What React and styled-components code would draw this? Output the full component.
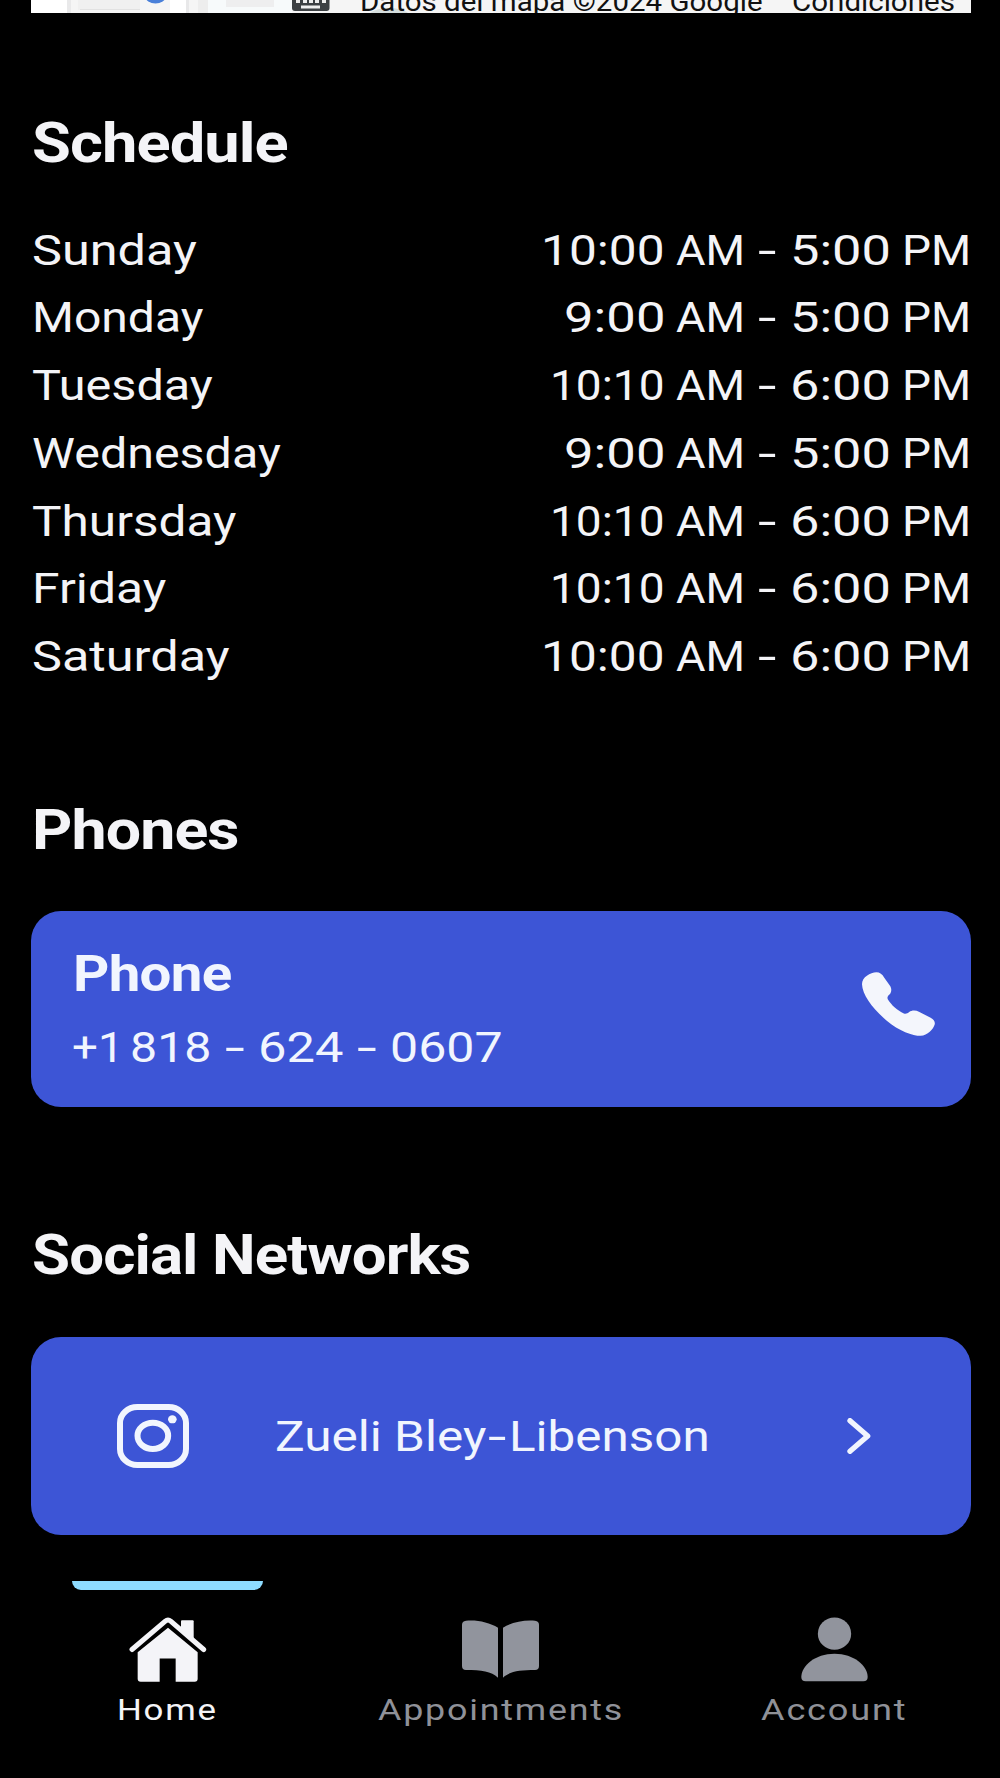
import { useLayoutEffect, useRef, useState } from 'react'
import styled, { createGlobalStyle } from 'styled-components'

const schedule = [
    { day: 'Sunday', dayWidth: 164.5, open: '10:00', openWidth: 124, close: '5:00' },
    { day: 'Monday', dayWidth: 171.5, open: '9:00', openWidth: 101.5, close: '5:00' },
    { day: 'Tuesday', dayWidth: 180.5, open: '10:10', openWidth: 115, close: '6:00' },
    { day: 'Wednesday', dayWidth: 249, open: '9:00', openWidth: 101.5, close: '5:00' },
    { day: 'Thursday', dayWidth: 204, open: '10:10', openWidth: 115, close: '6:00' },
    { day: 'Friday', dayWidth: 134, open: '10:10', openWidth: 115, close: '6:00' },
    { day: 'Saturday', dayWidth: 198, open: '10:00', openWidth: 124, close: '6:00' },
]

// Stretches its text sideways until it fills the given width
const WideText = ({ width, children }) => {
    const textRef = useRef()
    const [scale, setScale] = useState(1)

    useLayoutEffect(() => {
        setScale(width / textRef.current.offsetWidth)
    }, [width, children])

    return (
        <TextBox $width={width}>
            <TextInner ref={textRef} style={{ transform: `scaleX(${scale})` }}>
                {children}
            </TextInner>
        </TextBox>
    )
}

const MapPicture = () => (
    <MapSvg width="940" height="13" viewBox="31 0 940 13">
        <rect x="31" y="0" width="940" height="13" fill="#f5f5f5" />
        <rect x="31" y="0" width="36" height="13" fill="#ffffff" />
        <rect x="67" y="0" width="4" height="13" fill="#e9e9ea" />
        <rect x="78" y="0" width="62" height="10" fill="#f0f0f0" />
        <rect x="80" y="9" width="60" height="1" fill="#e2e2e2" />
        <ellipse cx="155.5" cy="-3" rx="10" ry="6.5" fill="#4a80d9" />
        <rect x="170" y="0" width="16" height="13" fill="#ffffff" />
        <rect x="186" y="0" width="3" height="13" fill="#e8e8e9" />
        <rect x="198" y="0" width="10" height="13" fill="#ededed" />
        <rect x="208" y="0" width="84" height="13" fill="#f7fafb" />
        <rect x="226" y="0" width="48" height="7" fill="#eeeeef" />
        <path d="M370 13 C378 7 398 6 408 13Z" fill="#d5dddd" />
        <rect x="292" y="-14" width="37.5" height="25" rx="3" fill="#3c4043" />
        <path d="M296 0h4v3h-4z M303 0h4v3h-4z M309 0h4v3h-4z M315 0h4v3h-4z M322 0h4v3h-4z M301 5.5h19v3h-19z" fill="#eeeeee" />
    </MapSvg>
)

const PhoneIcon = () => (
    <svg width="73" height="64" viewBox="189 248 218 190">
        <path
            fill="#f4f6fc"
            d="M232 248C242 248 250 254 255 264L272 288C279 298 277 308 271 315C265 320 264 324 266 329C277 347 295 363 314 371C320 373 325 371 330 367C337 361 350 361 359 366L394 384C404 390 408 396 406 404C402 418 385 436 364 438C340 438 300 424 262 392C222 358 190 316 189 284C189 262 214 249 232 248Z"
        />
    </svg>
)

const InstagramIcon = () => (
    <svg width="72" height="64" viewBox="352 581 216 192" fill="none" stroke="#f1f5fe" strokeWidth="18">
        <rect x="361" y="590" width="198" height="174" rx="52" ry="48" />
        <ellipse cx="459.5" cy="676.5" rx="46" ry="39.5" />
        <ellipse cx="518" cy="627" rx="13" ry="12" fill="#f1f5fe" stroke="none" />
    </svg>
)

const ChevronIcon = () => (
    <svg width="24" height="36" viewBox="1040 323 72 108">
        <path
            d="M1049 331L1102 377L1049 423"
            fill="none"
            stroke="#f1f5fe"
            strokeWidth="16"
            strokeLinecap="round"
            strokeLinejoin="round"
        />
    </svg>
)

const HomeIcon = () => (
    <svg width="78" height="65" viewBox="265 171.5 234 195" fill="#f4f4f8">
        <path
            d="M274 269L374 184Q382 177 390 184L489 269"
            fill="none"
            stroke="#f4f4f8"
            strokeWidth="15"
            strokeLinecap="round"
        />
        <path d="M421 184Q421 181 424 181H456Q459 181 459 184V245L421 212Z" />
        <path d="M382 204L471 277V357Q471 366 462 366H405V296H357V366H300Q291 366 291 357V277Z" />
    </svg>
)

const BookIcon = () => (
    <svg width="77" height="58" viewBox="306 89 231 174" fill="#91949d">
        <path d="M318 91C352 88 388 96 414 112V262C394 243 364 239 318 239Q306 239 306 227V103Q306 92 318 91Z" />
        <path d="M525 91C491 88 455 96 429 112V262C449 243 479 239 525 239Q537 239 537 227V103Q537 92 525 91Z" />
    </svg>
)

const PersonIcon = () => (
    <svg width="67" height="65" viewBox="303 82 201 195" fill="#91949d">
        <ellipse cx="403.5" cy="132" rx="50" ry="48.5" />
        <path d="M304 262C304 228 345 192 403.5 192C462 192 503 228 503 262Q503 275 490 275H317Q304 275 304 262Z" />
    </svg>
)

const App = () => {
    return (
        <Screen>
            <GlobalStyle />
            <MapStrip>
                <MapPicture />
                <MapCredit>
                    <WideText width={403}>Datos del mapa ©2024 Google</WideText>
                    <WideText width={163}>Condiciones</WideText>
                </MapCredit>
            </MapStrip>
            <Content>
                <ScheduleSection>
                    <Title>
                        <WideText width={256}>Schedule</WideText>
                    </Title>
                    <DayList>
                        {schedule.map((item) => (
                            <DayRow key={item.day}>
                                <WideText width={item.dayWidth}>{item.day}</WideText>
                                <Hours>
                                    <Time>
                                        <WideText width={item.openWidth}>{item.open}</WideText>{' '}
                                        <WideText width={69}>AM</WideText>
                                    </Time>{' '}
                                    <WideText width={19}>-</WideText>{' '}
                                    <Time>
                                        <WideText width={101}>{item.close}</WideText>{' '}
                                        <WideText width={69}>PM</WideText>
                                    </Time>
                                </Hours>
                            </DayRow>
                        ))}
                    </DayList>
                </ScheduleSection>
                <PhoneSection>
                    <Title>
                        <WideText width={207}>Phones</WideText>
                    </Title>
                    <PhoneCard>
                        <div>
                            <PhoneName>
                                <WideText width={158}>Phone</WideText>
                            </PhoneName>
                            <PhoneNumber>
                                <WideText width={52}>+1</WideText>{' '}
                                <WideText width={82}>818</WideText>{' '}
                                <WideText width={20}>-</WideText>{' '}
                                <WideText width={86}>624</WideText>{' '}
                                <WideText width={20}>-</WideText>{' '}
                                <WideText width={113}>0607</WideText>
                            </PhoneNumber>
                        </div>
                        <PhoneIcon />
                    </PhoneCard>
                </PhoneSection>
                <SocialSection>
                    <Title>
                        <WideText width={438}>Social Networks</WideText>
                    </Title>
                    <SocialCard>
                        <InstagramIcon />
                        <SocialName>
                            <WideText width={211}>Zueli Bley</WideText>
                            <WideText width={19}>-</WideText>
                            <WideText width={201}>Libenson</WideText>
                        </SocialName>
                        <ChevronIcon />
                    </SocialCard>
                </SocialSection>
            </Content>
            <NavBar>
                <NavItem $active>
                    <NavIcon>
                        <HomeIcon />
                    </NavIcon>
                    <WideText width={101}>Home</WideText>
                </NavItem>
                <NavItem>
                    <NavIcon>
                        <BookIcon />
                    </NavIcon>
                    <WideText width={246}>Appointments</WideText>
                </NavItem>
                <NavItem>
                    <NavIcon>
                        <PersonIcon />
                    </NavIcon>
                    <WideText width={147}>Account</WideText>
                </NavItem>
            </NavBar>
        </Screen>
    )
}

const GlobalStyle = createGlobalStyle`
    * {
        box-sizing: border-box;
    }
    body {
        margin: 0;
        background: #000;
        font-family: Roboto, 'Liberation Sans', sans-serif;
    }
    svg {
        display: block;
        flex-shrink: 0;
    }
`

const Screen = styled.div`
    display: flex;
    flex-direction: column;
    width: 1000px;
    height: 1778px;
    overflow: hidden;
    background: #000;
    color: #f4f4f7;
`

const TextBox = styled.span`
    display: block;
    flex-shrink: 0;
    width: ${({ $width }) => $width}px;
    white-space: nowrap;
`

const TextInner = styled.span`
    display: inline-block;
    transform-origin: left center;
`

const MapStrip = styled.div`
    position: relative;
    height: 13px;
    flex-shrink: 0;
    margin: 0 29px 0 31px;
    overflow: hidden;
`

const MapSvg = styled.svg`
    position: absolute;
    inset: 0;
`

const MapCredit = styled.div`
    position: relative;
    display: flex;
    justify-content: flex-end;
    gap: 29px;
    margin-top: -13px;
    padding-right: 16px;
    color: #111;
    font-size: 27px;
    line-height: 30px;
`

const Content = styled.main`
    padding: 100px 29px 0 31px;
`

const Title = styled.h2`
    margin: 0;
    padding-left: 1px;
    font-size: 56px;
    font-weight: 700;
    line-height: 61px;
    letter-spacing: -0.8px;
`

const ScheduleSection = styled.section`
    height: 687px;
`

const PhoneSection = styled.section`
    height: 425px;
`

const SocialSection = styled.section`
    height: 310px;
`

const DayList = styled.div`
    margin-top: 42.5px;
`

const DayRow = styled.div`
    display: flex;
    justify-content: space-between;
    height: 67.8px;
    padding-left: 1px;
    font-size: 42px;
    line-height: 67.6px;
`

const Hours = styled.div`
    display: flex;
    gap: 13px;
`

const Time = styled.div`
    display: flex;
    gap: 11px;
`

const Card = styled.div`
    display: flex;
    align-items: center;
    border-radius: 30px;
    background: #3d55d6;
    color: #f1f5fe;
`

const PhoneCard = styled(Card)`
    justify-content: space-between;
    height: 196px;
    margin-top: 50px;
    padding: 5px 36px 0 41px;

    svg {
        margin-bottom: 15px;
    }
`

const PhoneName = styled.div`
    padding-left: 1px;
    font-size: 50px;
    font-weight: 700;
    line-height: 71px;
    letter-spacing: -0.6px;
`

const PhoneNumber = styled.div`
    display: flex;
    gap: 13px;
    font-size: 43px;
    line-height: 75px;

    & > :first-child {
        margin-right: -7px;
    }
`

const SocialCard = styled(Card)`
    height: 198px;
    margin-top: 50.5px;
    padding: 0 100px 0 86px;
`

const SocialName = styled.div`
    display: flex;
    flex: 1;
    gap: 2px;
    padding: 2px 0 0 86px;
    font-size: 42px;
    line-height: 60px;
`

const NavBar = styled.nav`
    display: grid;
    grid-template-columns: repeat(3, 1fr);
    margin: 46px -1px 0 1px;
`

const NavItem = styled.div`
    display: flex;
    flex-direction: column;
    align-items: center;
    color: ${({ $active }) => ($active ? '#f4f4f7' : '#8f9198')};
    font-size: 30px;
    line-height: 40px;
    letter-spacing: 1.5px;

    &::before {
        content: '';
        width: 191px;
        height: 9px;
        border-radius: 0 0 9px 9px;
        background: ${({ $active }) => ($active ? '#8edcff' : 'transparent')};
    }
`

const NavIcon = styled.div`
    display: flex;
    align-items: center;
    height: 66px;
    margin: 26px 0 8px;
`

export default App
